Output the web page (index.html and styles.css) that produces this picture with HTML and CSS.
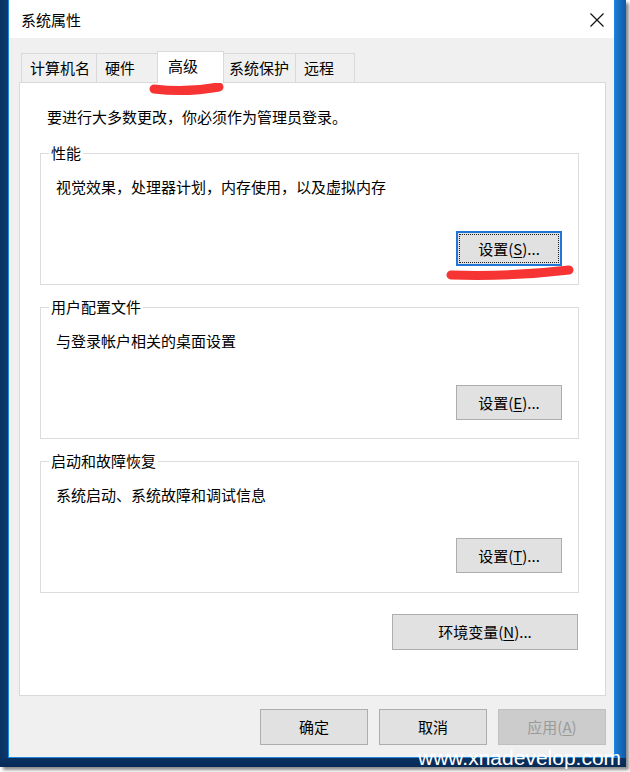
FILE: index.html
```html
<!DOCTYPE html>
<html lang="zh-CN">
<head>
<meta charset="utf-8">
<title>系统属性</title>
<link rel="stylesheet" href="styles.css">
</head>
<body>
<div class="screen">
  <div class="window">
    <div class="titlebar">
      <span class="title">系统属性</span>
      <svg class="close" width="14" height="14" viewBox="0 0 14 14"><path d="M0.5 0.5 L13.5 13.5 M13.5 0.5 L0.5 13.5" stroke="#111" stroke-width="1.2" fill="none"/></svg>
    </div>
    <div class="body">
      <div class="tabs">
        <div class="tab tab-name">计算机名</div>
        <div class="tab tab-hw">硬件</div>
        <div class="tab tab-adv active">高级</div>
        <div class="tab tab-prot">系统保护</div>
        <div class="tab tab-remote">远程</div>
      </div>
      <div class="panel">
        <p class="note">要进行大多数更改，你必须作为管理员登录。</p>
        <fieldset class="group g1">
          <legend>性能</legend>
          <p class="desc">视觉效果，处理器计划，内存使用，以及虚拟内存</p>
          <div class="btn-row"><button class="btn focus">设置(<u>S</u>)...</button></div>
        </fieldset>
        <fieldset class="group g2">
          <legend>用户配置文件</legend>
          <p class="desc">与登录帐户相关的桌面设置</p>
          <div class="btn-row"><button class="btn">设置(<u>E</u>)...</button></div>
        </fieldset>
        <fieldset class="group g3">
          <legend>启动和故障恢复</legend>
          <p class="desc">系统启动、系统故障和调试信息</p>
          <div class="btn-row"><button class="btn">设置(<u>T</u>)...</button></div>
        </fieldset>
        <div class="env-row"><button class="btn env">环境变量(<u>N</u>)...</button></div>
      </div>
      <div class="footer">
        <button class="btn dlg">确定</button>
        <button class="btn dlg">取消</button>
        <button class="btn dlg" disabled>应用(<u>A</u>)</button>
      </div>
    </div>
  </div>
  <svg class="mark mark-tab" width="630" height="772" viewBox="0 0 630 772"><path d="M154 89 Q 186 93 219 87" stroke="#f73434" stroke-width="9" stroke-linecap="round" fill="none"/></svg>
  <svg class="mark mark-btn" width="630" height="772" viewBox="0 0 630 772"><path d="M451 275 Q 510 277 569 270" stroke="#f73434" stroke-width="9" stroke-linecap="round" fill="none"/></svg>
  <div class="watermark">www.xnadevelop.com</div>
</div>
</body>
</html>
```

FILE: styles.css
```css
* { box-sizing: border-box; }
html, body { margin: 0; padding: 0; background: #fff; }
body {
  width: 630px;
  height: 772px;
  overflow: hidden;
  font-family: "Noto Sans CJK SC", "Microsoft YaHei", sans-serif;
  font-size: 15px;
  color: #000;
}
.screen {
  position: relative;
  width: 626px;
  height: 767px;
  padding-left: 8px;
  background:
    linear-gradient(to top, #082b56 0, #0a3161 9px, transparent 9px),
    linear-gradient(to right, #0a3262 0, #0c3a70 8px, #1a6fc2 560px, #1b80d6 614px, #0f5aa6 626px);
  box-shadow: 3px 3px 3px rgba(0, 0, 0, 0.45);
}
.window {
  width: 607px;
  height: 758px;
  border: 1px solid #1f88de;
  border-top: none;
  background: #f0f0f0;
  display: flex;
  flex-direction: column;
}
.titlebar {
  height: 38px;
  flex: none;
  background: #fff;
  display: flex;
  align-items: center;
  justify-content: space-between;
  padding: 1px 10px 0 12px;
}
.title { line-height: 20px; }
.close { display: block; }
.body {
  flex: 1;
  padding: 0 8px 0 10px;
}
.tabs {
  height: 31px;
  margin-top: 13px;
  padding-left: 2px;
  display: flex;
  align-items: flex-end;
}
.tab {
  height: 29px;
  line-height: 28px;
  border: 1px solid #d9d9d9;
  border-bottom: none;
  background: #f0f0f0;
  white-space: nowrap;
  padding-left: 8px;
}
.tab + .tab { margin-left: -1px; }
.tab-name { width: 76px; }
.tab-hw { width: 62px; }
.tab-adv { width: 67px; padding-left: 10px; }
.tab-prot { width: 73px; padding-left: 5px; }
.tab-remote { width: 60px; }
.tab.active {
  position: relative;
  z-index: 1;
  height: 32px;
  line-height: 27px;
  margin-bottom: -1px;
  background: #fff;
}
.panel {
  background: #fff;
  border: 1px solid #d9d9d9;
  padding: 24px 0 45px 0;
}
.note {
  margin: 0 0 0 27px;
  line-height: 20px;
}
.group {
  margin: 17px 26px 0 20px;
  border: 1px solid #dcdcdc;
  padding: 15px 16px 18px 8px;
  min-width: 0;
}
.group.g2 { margin-top: 13px; }
.group.g3 { margin-top: 13px; }
.group legend {
  padding: 0 2px;
  line-height: 18px;
}
.desc {
  margin: 0;
  padding-left: 7px;
  line-height: 20px;
}
.btn-row {
  margin-top: 34px;
  display: flex;
  justify-content: flex-end;
}
.g3 .btn-row { margin-top: 33px; }
.g3 { padding-bottom: 19px; }
.btn {
  font-family: inherit;
  font-size: 15px;
  color: #000;
  width: 106px;
  height: 35px;
  padding: 0;
  line-height: 20px;
  background: #e1e1e1;
  border: 1px solid #adadad;
  border-radius: 0;
}
.btn u { text-underline-offset: 2px; }
.btn.focus {
  border: 2px solid #1f76d6;
  outline: 1px dotted #222;
  outline-offset: -4px;
}
.env-row {
  margin: 21px 27px 0 0;
  display: flex;
  justify-content: flex-end;
}
.btn.env { width: 186px; height: 36px; }
.footer {
  padding-top: 13px;
  display: flex;
  justify-content: flex-end;
  gap: 11px;
}
.btn.dlg { width: 108px; height: 36px; }
.btn[disabled] {
  background: #cccccc;
  border-color: #bfbfbf;
  color: #9a9a9a;
}
.mark {
  position: absolute;
  left: 0;
  top: 0;
  pointer-events: none;
}
.watermark {
  position: absolute;
  left: 418px;
  top: 747px;
  font-family: "Liberation Sans", Arial, sans-serif;
  font-size: 21px;
  line-height: 21px;
  color: #fff;
  white-space: nowrap;
}
```
